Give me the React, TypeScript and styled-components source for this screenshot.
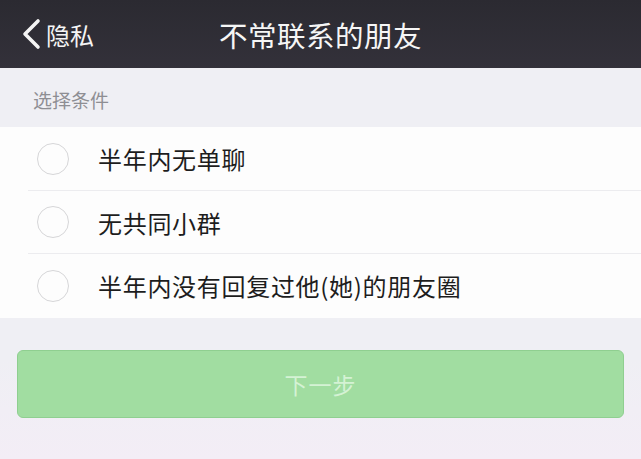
import React from "react";
import styled, { createGlobalStyle } from "styled-components";

const Global = createGlobalStyle`
  html, body { margin: 0; padding: 0; }
  body {
    width: 641px; height: 459px; overflow: hidden;
    background: #efeff4;
    font-family: "Noto Sans CJK SC", "Noto Sans", sans-serif;
  }
`;

const Page = styled.div`
  width: 641px;
  height: 459px;
  display: flex;
  flex-direction: column;
  background: #efeff4;
`;

const NavBar = styled.header`
  height: 68px;
  background: linear-gradient(#2b2a31, #33313a);
  position: relative;
  display: flex;
  align-items: center;
  justify-content: center;
  flex-shrink: 0;
`;

const Back = styled.div`
  position: absolute;
  left: 20px;
  top: 0;
  height: 68px;
  display: flex;
  align-items: center;
  gap: 4px;
  color: #f4f4f4;
  font-size: 24px;
`;

const Title = styled.h1`
  margin: 0;
  color: #f6f6f6;
  font-size: 28.5px;
  font-weight: 400;
  letter-spacing: 0.5px;
`;

const SectionLabel = styled.div`
  height: 59px;
  display: flex;
  align-items: center;
  padding: 4px 0 0 33px;
  box-sizing: border-box;
  color: #8e8e93;
  font-size: 19px;
`;

const List = styled.div`
  background: #fdfdfd;
  display: flex;
  flex-direction: column;
`;

const Row = styled.div<{ $last?: boolean }>`
  height: 63.5px;
  display: flex;
  align-items: center;
  position: relative;
  padding-left: 37px;
  &::after {
    content: "";
    display: ${(p) => (p.$last ? "none" : "block")};
    position: absolute;
    left: 28px;
    right: 0;
    bottom: 0;
    height: 1px;
    background: #ececef;
  }
`;

const Radio = styled.span`
  width: 30px;
  height: 30px;
  border-radius: 50%;
  border: 1.5px solid #d6d6d8;
  box-sizing: content-box;
  flex-shrink: 0;
  margin-right: 29px;
`;

const Label = styled.span`
  font-size: 24px;
  color: #1d1d1d;
  letter-spacing: 0.7px;
`;

const Footer = styled.div`
  flex: 1;
  padding: 32px 17px 0 17px;
  background: linear-gradient(#efeff4 0%, #efeff4 30%, #f3edf6 100%);
`;

const NextButton = styled.button`
  width: 100%;
  height: 68px;
  border-radius: 6px;
  border: 1px solid #8fcf90;
  background: #a1dda1;
  color: #d4f2d4;
  font-size: 23px;
  font-family: inherit;
  letter-spacing: 1px;
  display: flex;
  align-items: center;
  justify-content: center;
`;

const options = ["半年内无单聊", "无共同小群", "半年内没有回复过他(她)的朋友圈"];

export default function App() {
  return (
    <Page>
      <Global />
      <NavBar>
        <Back>
          <svg width="22" height="32" viewBox="0 0 22 32">
            <path d="M18 3 L5 16 L18 29" fill="none" stroke="#f4f4f4" strokeWidth="3.6" strokeLinecap="round" strokeLinejoin="round" />
          </svg>
          <span>隐私</span>
        </Back>
        <Title>不常联系的朋友</Title>
      </NavBar>
      <SectionLabel>选择条件</SectionLabel>
      <List>
        {options.map((o, i) => (
          <Row key={o} $last={i === options.length - 1}>
            <Radio />
            <Label>{o}</Label>
          </Row>
        ))}
      </List>
      <Footer>
        <NextButton>下一步</NextButton>
      </Footer>
    </Page>
  );
}
